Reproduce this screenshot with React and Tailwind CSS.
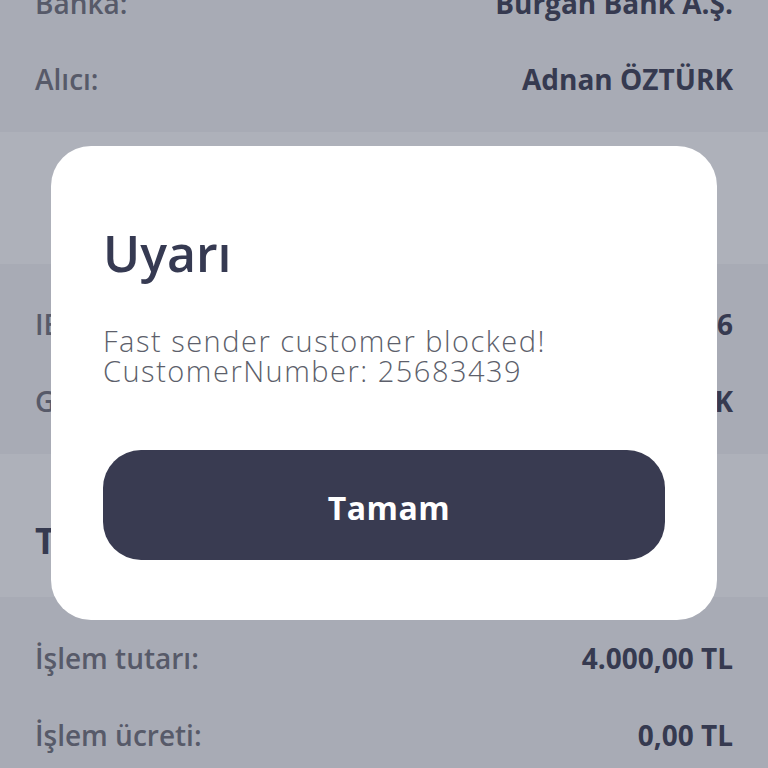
export default function App() {
  const label = "text-[28px] font-semibold text-[#575a69]";
  const value = "text-[28px] font-bold text-[#363a50]";
  return (
    <div className="relative w-[768px] h-[768px] overflow-hidden font-['Open_Sans',sans-serif]">
      <div className="flex flex-col">
        <div className="bg-[#a8abb5] -mt-[35px] pb-[15px] px-[35px] flex flex-col">
          <div className="h-[76px] flex items-center justify-between">
            <span className={label}>Banka:</span>
            <span className={value}>Burgan Bank A.Ş.</span>
          </div>
          <div className="h-[76px] flex items-center justify-between">
            <span className={label}>Alıcı:</span>
            <span className={value}>Adnan ÖZTÜRK</span>
          </div>
        </div>
        <div className="bg-[#aeb1ba] h-[132px]"></div>
        <div className="bg-[#a8abb5] pt-[21px] pb-[15px] px-[35px] flex flex-col">
          <div className="h-[77px] flex items-center justify-between">
            <span className={label}>IBAN:</span>
            <span className={value}>TR00 0012 5000 0000 0076</span>
          </div>
          <div className="h-[77px] flex items-center justify-between">
            <span className={label}>Gönderen:</span>
            <span className={value}>Adnan ÖZTÜRK</span>
          </div>
        </div>
        <div className="bg-[#aeb1ba] h-[143px] pt-[65px] px-[35px]">
          <div className="text-[36px] font-bold text-[#363a50] leading-[1.2]">Tutar Bilgileri</div>
        </div>
        <div className="bg-[#a8abb5] pt-[22px] px-[35px] flex flex-col h-[200px]">
          <div className="h-[77px] flex items-center justify-between">
            <span className={label}>İşlem tutarı:</span>
            <span className={value}>4.000,00 TL</span>
          </div>
          <div className="h-[77px] flex items-center justify-between">
            <span className={label}>İşlem ücreti:</span>
            <span className={value}>0,00 TL</span>
          </div>
        </div>
      </div>

      <div className="absolute top-[146px] left-[51px] w-[666px] h-[474px] rounded-[40px] bg-white px-[52px] pt-[77px] flex flex-col">
        <div className="text-[50px] font-semibold leading-[1.2] text-[#363a52]">Uyarı</div>
        <div className="mt-[43px] text-[29px] leading-[30px] font-light text-[#5d5f6b] tracking-[1.5px]">
          <div>Fast sender customer blocked!</div>
          <div>CustomerNumber: 25683439</div>
        </div>
        <button className="mt-[64px] h-[110px] w-full rounded-[38px] bg-[#393b51] text-white text-[32px] font-bold pt-[5px] pl-[10px] tracking-[0.5px]">
          Tamam
        </button>
      </div>
    </div>
  );
}
